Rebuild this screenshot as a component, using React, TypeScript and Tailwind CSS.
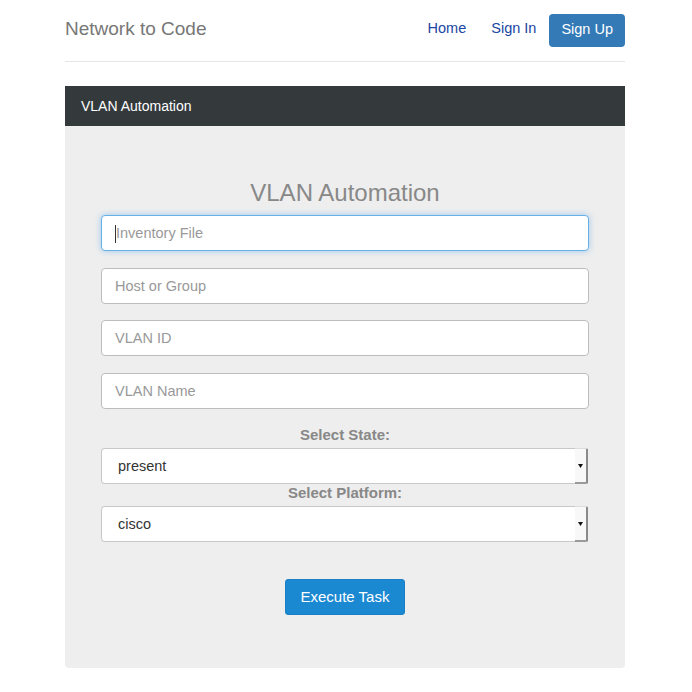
import { useState } from "react";

const font = { fontFamily: '"Liberation Sans", Arial, sans-serif' };

function NavLink({ label }: { label: string }) {
    return (
        <a href="#" className="px-[12px] pt-[5px] pb-[9px] text-[14.5px] leading-[20px] text-[#1a46a3]">
            {label}
        </a>
    );
}

function TextField({ placeholder, focused }: { placeholder: string; focused?: boolean }) {
    return (
        <div
            className={
                focused
                    ? "h-[36px] w-full rounded-[4px] border border-[#66afe9] bg-white shadow-[0_0_6px_rgba(102,175,233,0.6)] flex items-center px-[13px] pt-[2px]"
                    : "h-[36px] w-full rounded-[4px] border border-[#bdbdbd] bg-white flex items-center px-[13px] pt-[2px]"
            }
        >
            {focused && <span className="w-px h-[18px] bg-[#333]" />}
            <span className="text-[14.5px] text-[#999]">{placeholder}</span>
        </div>
    );
}

function SelectBox({ value }: { value: string }) {
    return (
        <div className="h-[36px] w-[487px] flex">
            <div className="flex-1 rounded-l-[4px] border border-r-0 border-[#c8c8c8] bg-white flex items-center pl-[16px] pt-[2px] text-[14.5px] text-[#333]">
                {value}
            </div>
            <div className="w-[13px] bg-[#f8f8f8] border-t border-[#ddd] border-r-2 border-r-[#8a8a8a] border-b-2 border-b-[#9a9a9a] rounded-r-[2px] flex items-center justify-center">
                <svg width="5" height="4" viewBox="0 0 5 4">
                    <path d="M0 0h5L2.5 4z" fill="#111" />
                </svg>
            </div>
        </div>
    );
}

export default function App() {
    const [state] = useState("present");
    const [platform] = useState("cisco");

    return (
        <div className="min-h-[692px] bg-white" style={font}>
            <div className="w-[562px] mx-auto pr-[2px]">
                {/* Header */}
                <header className="pt-[13px] pb-[14px] border-b border-[#e5e5e5] flex items-center justify-between">
                    <span className="text-[19px] leading-[29px] pb-[4px] text-[#777]">Network to Code</span>
                    <nav className="flex items-center gap-[1px]">
                        <NavLink label="Home" />
                        <NavLink label="Sign In" />
                        <a href="#" className="px-[12px] h-[33px] flex items-center rounded-[4px] bg-[#337ab7] text-white text-[14.5px]">
                            Sign Up
                        </a>
                    </nav>
                </header>

                {/* Panel */}
                <section className="mt-[24px] rounded-b-[4px] overflow-hidden">
                    <div className="h-[40px] px-[16px] flex items-center bg-[#343a3c] text-white text-[14px]">
                        VLAN Automation
                    </div>
                    <div className="bg-[#eeeeee] px-[36px] pt-[54px] pb-[53px] flex flex-col items-center">
                        <h2 className="text-[24px] leading-[26px] text-[#888] mb-[9px]">VLAN Automation</h2>
                        <TextField placeholder="Inventory File" focused />
                        <div className="h-[17px]" />
                        <TextField placeholder="Host or Group" />
                        <div className="h-[16px]" />
                        <TextField placeholder="VLAN ID" />
                        <div className="h-[17px]" />
                        <TextField placeholder="VLAN Name" />

                        <label className="mt-[17px] mb-[4px] text-[15px] leading-[18px] font-bold text-[#888]">Select State:</label>
                        <div className="self-start">
                            <SelectBox value={state} />
                        </div>
                        <label className="mb-[4px] text-[15px] leading-[18px] font-bold text-[#888]">Select Platform:</label>
                        <div className="self-start">
                            <SelectBox value={platform} />
                        </div>

                        <button className="mt-[37px] h-[36px] px-[15px] rounded-[3px] bg-[#1b88d2] border border-[#1a7fc4] text-white text-[15px]">
                            Execute Task
                        </button>
                    </div>
                </section>
            </div>
        </div>
    );
}
